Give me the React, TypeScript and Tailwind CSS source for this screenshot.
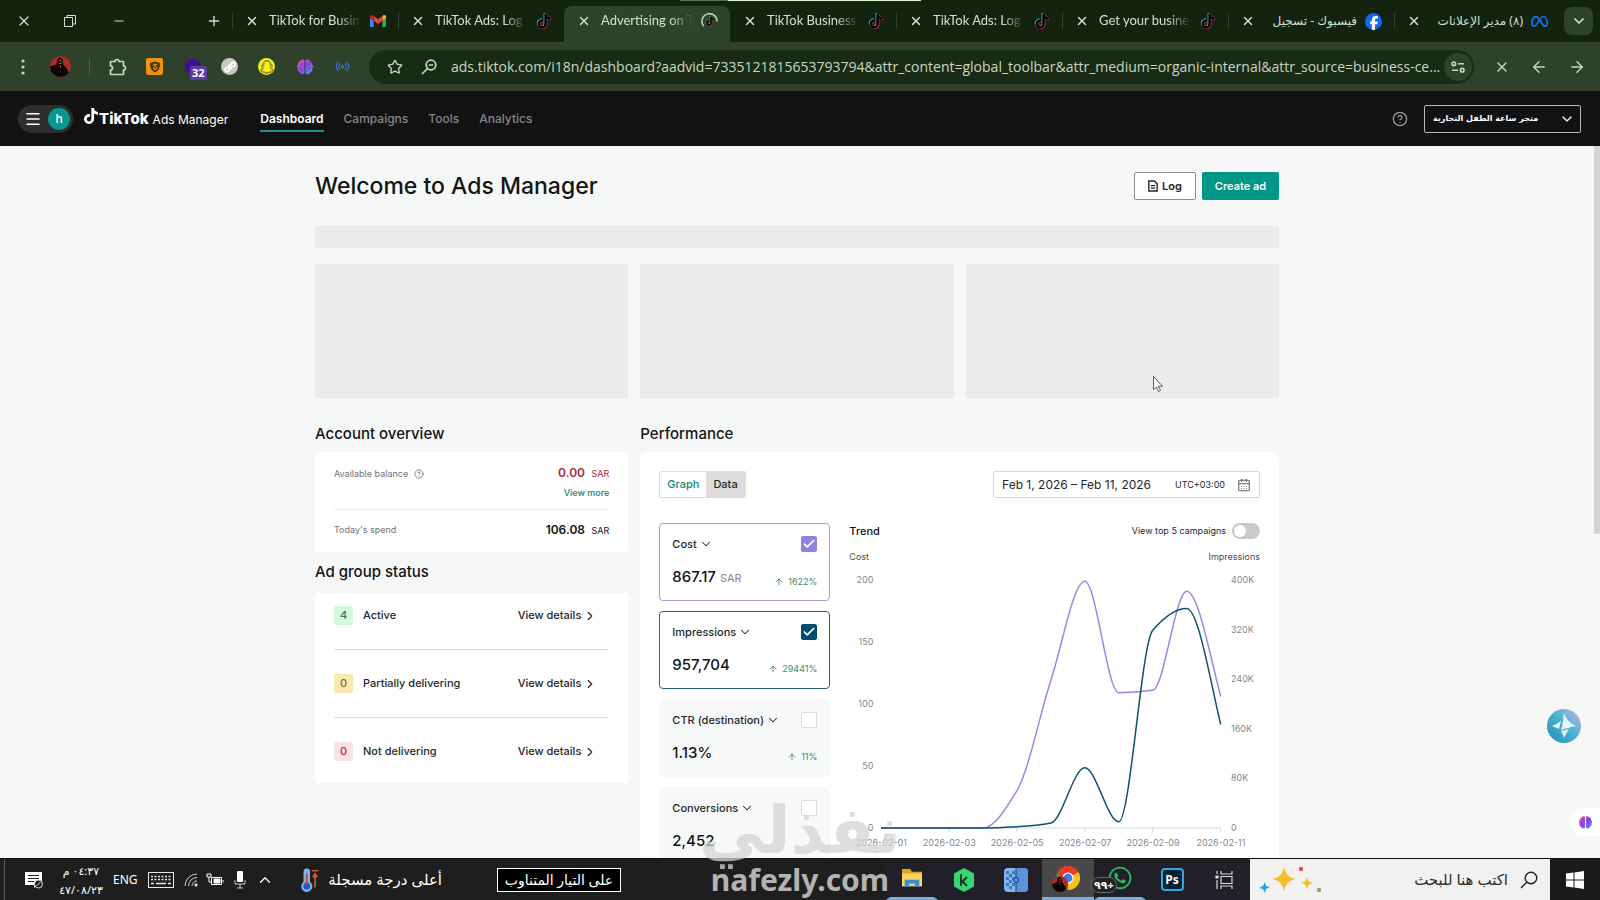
import React from 'react';
import {
  ArrowLeft,
  ArrowRight,
  ArrowUp,
  CalendarDays,
  Check,
  ChevronDown,
  ChevronRight,
  ChevronUp,
  CircleHelp,
  Menu,
  Minus,
  Plus,
  Radio,
  Star,
  X,
} from 'lucide-react';
import { FaFacebookF, FaMeta, FaSnapchat, FaWhatsapp } from 'react-icons/fa6';

// Types
interface BrowserTab {
  id: number;
  title: string;
  icon: 'gmail' | 'tiktok' | 'loading' | 'facebook' | 'meta';
  rtl?: boolean;
}

interface Metric {
  id: string;
  label: string;
  value: string;
  unit?: string;
  change: string;
  checked: boolean;
  card: string;
  box: string;
}

interface StatusRow {
  label: string;
  count: number;
  badge: string;
}

const tabs: BrowserTab[] = [
  { id: 1, title: 'TikTok for Business', icon: 'gmail' },
  { id: 2, title: 'TikTok Ads: Log in', icon: 'tiktok' },
  { id: 3, title: 'Advertising on TikTok', icon: 'loading' },
  { id: 4, title: 'TikTok Business Center', icon: 'tiktok' },
  { id: 5, title: 'TikTok Ads: Log in', icon: 'tiktok' },
  { id: 6, title: 'Get your business', icon: 'tiktok' },
  { id: 7, title: 'فيسبوك - تسجيل', icon: 'facebook', rtl: true },
  { id: 8, title: '(٨) مدير الإعلانات', icon: 'meta', rtl: true },
];

const navItems = ['Dashboard', 'Campaigns', 'Tools', 'Analytics'];

const metrics: Metric[] = [
  { id: 'cost', label: 'Cost', value: '867.17', unit: 'SAR', change: '1622%', checked: true, card: 'border-[#a99be0] bg-white', box: 'border-[#8f80e6] bg-[#8f80e6]' },
  { id: 'impressions', label: 'Impressions', value: '957,704', change: '29441%', checked: true, card: 'border-[#2f6480] bg-white', box: 'border-[#004d6e] bg-[#004d6e]' },
  { id: 'ctr', label: 'CTR (destination)', value: '1.13%', change: '11%', checked: false, card: 'border-[#f7f8f8] bg-[#f7f8f8]', box: 'border-[#dcdcdc] bg-white' },
  { id: 'conversions', label: 'Conversions', value: '2,452', change: '', checked: false, card: 'border-[#f7f8f8] bg-[#f7f8f8]', box: 'border-[#dcdcdc] bg-white' },
];

const statusRows: StatusRow[] = [
  { label: 'Active', count: 4, badge: 'bg-[#d5f8dd] text-[#2b7d4f]' },
  { label: 'Partially delivering', count: 0, badge: 'bg-[#f8e9b0] text-[#8a6a1c]' },
  { label: 'Not delivering', count: 0, badge: 'bg-[#fbe3e1] text-[#b5303c]' },
];

const costSeries = [0, 0, 0, 0, 30, 119, 199, 109, 111, 191, 106];
const impressionSeries = [0, 0, 0, 0, 2, 8, 97, 10, 319, 354, 167];

const PLOT_W = 340;
const PLOT_H = 248;

// Monotone cubic path through evenly spaced points
const smoothPath = (values: number[], max: number): string => {
  const step = PLOT_W / (values.length - 1);
  const ys = values.map((v) => PLOT_H - (v / max) * PLOT_H);
  const slopes = ys.slice(1).map((y, i) => y - ys[i]);
  const tangents = ys.map((_, i) => {
    if (i === 0) return slopes[0];
    if (i === ys.length - 1) return slopes[i - 1] * 1.25;
    const a = slopes[i - 1];
    const b = slopes[i];
    return a * b <= 0 ? 0 : (2 * a * b) / (a + b);
  });
  let d = `M0 ${ys[0]}`;
  for (let i = 1; i < ys.length; i++) {
    d += ` C${(i - 1 + 1 / 3) * step} ${ys[i - 1] + tangents[i - 1] / 3} ${(i - 1 / 3) * step} ${ys[i] - tangents[i] / 3} ${i * step} ${ys[i]}`;
  }
  return d;
};

const NOTE =
  'M12.525.02c1.31-.02 2.61-.01 3.91-.02.08 1.53.63 3.09 1.75 4.17 1.12 1.11 2.7 1.62 4.24 1.79v4.03c-1.44-.05-2.89-.35-4.2-.97-.57-.26-1.1-.59-1.62-.93-.01 2.92.01 5.84-.02 8.75-.08 1.4-.54 2.79-1.35 3.94-1.31 1.92-3.58 3.17-5.91 3.21-1.43.08-2.86-.31-4.08-1.03-2.02-1.19-3.44-3.37-3.65-5.71-.02-.5-.03-1-.01-1.49.18-1.9 1.12-3.72 2.58-4.96 1.66-1.44 3.98-2.13 6.15-1.72.02 1.48-.04 2.96-.04 4.44-.99-.32-2.15-.23-3.02.37-.63.41-1.11 1.04-1.36 1.75-.21.51-.15 1.07-.14 1.61.24 1.64 1.82 3.02 3.5 2.87 1.12-.01 2.19-.66 2.77-1.61.19-.33.4-.67.41-1.06.1-1.79.06-3.57.07-5.36.01-4.03-.01-8.05.02-12.07z';

// Icons
const TikTokColor: React.FC<{ className?: string }> = ({ className }) => (
  <svg viewBox="-1 -1 26 26" className={className}>
    <path d={NOTE} fill="#25c9c4" transform="translate(-1.2 -1)" />
    <path d={NOTE} fill="#d61f4c" transform="translate(1.2 1)" />
    <path d={NOTE} fill="#050505" />
  </svg>
);

const Gmail: React.FC = () => (
  <svg viewBox="52 42 88 66" className="w-4">
    <path fill="#4285f4" d="M58 108h14V74L52 59v43c0 3.32 2.69 6 6 6" />
    <path fill="#34a853" d="M120 108h14c3.32 0 6-2.69 6-6V59l-20 15" />
    <path fill="#fbbc04" d="M120 48v26l20-15v-8c0-7.42-8.47-11.65-14.4-7.2" />
    <path fill="#ea4335" d="M72 74V48l24 18 24-18v26L96 92" />
    <path fill="#c5221f" d="M52 51v8l20 15V48l-5.6-4.2c-5.94-4.45-14.4-.22-14.4 7.2" />
  </svg>
);

const BrainIcon: React.FC<{ className?: string; id: string }> = ({ className, id }) => (
  <svg viewBox="0 0 20 20" className={className}>
    <defs>
      <linearGradient id={id} x1="0" y1="0" x2="1" y2="1">
        <stop offset="0" stopColor="#f4559a" />
        <stop offset=".5" stopColor="#8a4be8" />
        <stop offset="1" stopColor="#4aa2f5" />
      </linearGradient>
    </defs>
    <path
      fill={`url(#${id})`}
      d="M9.4 2.6C8.4 1 5.6 1.2 5 3.2 3 3.4 2 5.2 2.6 6.8.9 7.8.6 10.2 2 11.4c-.8 2 .2 3.8 2 4.2.4 2.4 4 3.4 5.4 1.4zM10.6 2.6C11.6 1 14.4 1.2 15 3.2c2 .2 3 2 2.4 3.6 1.7 1 2 3.4.6 4.6.8 2-.2 3.8-2 4.2-.4 2.4-4 3.4-5.4 1.4z"
    />
    <path
      d="M4.6 7c1.200-.6 2.400 0 2.600 1.200M3.400 11.400c1.400-.6 3 0 3.200 1.600M6.800 4.600v1.200M15.400 7c-1.200-.6-2.400 0-2.600 1.200M16.600 11.400c-1.400-.6-3 0-3.200 1.600M13.200 4.600v1.200M7.200 15.200v-1M12.800 15.200v-1"
      stroke="#43208a"
      strokeOpacity=".6"
      fill="none"
    />
  </svg>
);

const ProfileBubble: React.FC<{ className?: string; id: string }> = ({ className, id }) => (
  <svg viewBox="0 0 20 20" className={className}>
    <clipPath id={id}>
      <circle cx="10" cy="10" r="10" />
    </clipPath>
    <g clipPath={`url(#${id})`}>
      <rect width="20" height="20" fill="#b02828" />
      <path d="M0 10l6-2 1-5c1-2 4-2 5 0l.5 5 3.500 4 4 8H0z" fill="#0c0606" />
      <path d="M9 4l2 1M9 7h2M10 9v2" stroke="#e0563c" />
    </g>
  </svg>
);

const TabIcon: React.FC<{ icon: BrowserTab['icon'] }> = ({ icon }) => {
  if (icon === 'gmail') return <Gmail />;
  if (icon === 'tiktok') return <TikTokColor className="w-4 h-4" />;
  if (icon === 'facebook') {
    return (
      <span className="flex h-[17px] w-[17px] items-end justify-center overflow-hidden rounded-full bg-[#0f66f5]">
        <FaFacebookF className="h-3.5 w-3.5 text-white" />
      </span>
    );
  }
  if (icon === 'meta') return <FaMeta className="h-[17px] w-[17px] text-[#1470e8]" />;
  return (
    <span className="relative flex h-[17px] w-[17px] items-center justify-center">
      <TikTokColor className="h-2.5 w-2.5" />
      <svg viewBox="0 0 18 18" className="absolute inset-0">
        <path d="M3 14A8 8 0 1 1 17 9" fill="none" stroke="#b9dbae" strokeWidth="1.600" />
      </svg>
    </span>
  );
};

// Browser chrome
const TabStrip: React.FC = () => (
  <div className="relative flex h-[42px] shrink-0 items-stretch bg-[#14230f] text-[#d3e0cc]">
    <div className="absolute left-[680px] top-0 flex h-px w-[241px]">
      <span className="w-12 bg-[#5b6f56]" />
      <span className="flex-1 bg-[#d9f2cf]" />
    </div>
    <div className="flex w-[232px] shrink-0 items-center pl-4">
      <button aria-label="Close window"><X className="h-4 w-4" strokeWidth={1.75} /></button>
      <button aria-label="Restore" className="ml-8">
        <svg viewBox="0 0 12 12" className="h-3 w-3" fill="none" stroke="currentColor">
          <path d="M.5 2.500h8v9h-8zM3 2.500v-2h8.500v8.500h-3" />
        </svg>
      </button>
      <button aria-label="Minimize" className="ml-9"><Minus className="h-3.5 w-3.5" strokeWidth={1.75} /></button>
      <button aria-label="New tab" className="ml-auto mr-2.5"><Plus className="h-4 w-4" /></button>
    </div>
    <div role="tablist" className="flex min-w-0 flex-1">
      {tabs.map((tab) => {
        const active = tab.icon === 'loading';
        const divider = tab.id !== 3 && tab.id !== 4;
        return (
          <div
            key={tab.id}
            role="tab"
            aria-selected={active}
            className={`flex min-w-0 flex-1 items-center ${active ? 'mt-1.5 rounded-t-lg bg-[#2f422b] pb-1.5' : ''}`}
          >
            <span className={`h-4 w-px shrink-0 ${divider ? 'bg-[#2f422b]' : ''}`} />
            <button aria-label="Close tab" className="ml-3 shrink-0"><X className="h-3.5 w-3.5" strokeWidth={2.5} /></button>
            <span
              dir={tab.rtl ? 'rtl' : 'ltr'}
              className={`ml-2.5 flex-1 overflow-hidden whitespace-nowrap ${tab.rtl ? 'text-xs' : "text-[13px] font-['Lato','Open_Sans',sans-serif] [mask-image:linear-gradient(to_right,black_75%,transparent)]"}`}
            >
              {tab.title}
            </span>
            <span className="ml-2 mr-3 flex w-[17px] shrink-0 justify-center"><TabIcon icon={tab.icon} /></span>
          </div>
        );
      })}
    </div>
    <div className="flex w-10 shrink-0 items-center pl-1">
      <button aria-label="Search tabs" className="flex h-7 w-[29px] items-center justify-center rounded-lg bg-[#2f422b]">
        <ChevronDown className="h-4 w-4" strokeWidth={2.5} />
      </button>
    </div>
  </div>
);

const AddressBar: React.FC = () => (
  <div className="flex h-[49px] shrink-0 items-center bg-[#2f402b] text-[#c8d6c0]">
    <div className="flex w-[369px] shrink-0 items-center pl-[21px]">
      <svg viewBox="0 0 4 16" className="h-4 w-1" fill="currentColor">
        <circle cx="2" cy="2" r="1.600" /><circle cx="2" cy="8" r="1.600" /><circle cx="2" cy="14" r="1.600" />
      </svg>
      <ProfileBubble id="toolbar-profile" className="ml-[25px] h-[21px] w-[21px]" />
      <span className="ml-[18px] h-4 w-px bg-[#4b6045]" />
      <svg viewBox="0 0 18 18" className="ml-[19px] h-[18px] w-[18px]" fill="none" stroke="currentColor" strokeWidth="1.700" strokeLinejoin="round">
        <path d="M1.500 3.500H6a2 2 0 0 1 4 0h4.500V8a2 2 0 0 1 0 4v4.500h-13v-4.500a2 2 0 0 0 0-4z" />
      </svg>
      <span className="ml-[19px] flex h-[17px] w-[17px] items-center justify-center rounded-xs bg-[#f0920f]">
        <svg viewBox="0 0 14 14" className="h-3.5 w-3.5">
          <path d="M2 3l5-1.500L12 3c0 5-1.500 8-5 9.500C3.500 11 2 8 2 3z" fill="#4a3210" />
          <path d="M5 9l4-5M5 6a2 2 0 0 1 3-1.500M6 9.500a2.500 2.500 0 0 0 3-2.500" stroke="#f0920f" strokeWidth="1.200" fill="none" />
        </svg>
      </span>
      <span className="relative ml-[21px] h-[17px] w-[17px]">
        <svg viewBox="0 0 18 18" className="h-[17px] w-[17px]">
          <path d="M9 0l8 4v6l-8 7-8-4V5z" fill="#3c1192" />
        </svg>
        <span className="absolute left-1.5 top-2 rounded-xs bg-[#5c3da8] px-0.5 text-[11px] font-bold leading-[14px] text-white">32</span>
      </span>
      <span className="ml-5 flex h-[17px] w-[17px] items-center justify-center rounded-full bg-[#c5cbc2]">
        <svg viewBox="0 0 16 16" className="h-4 w-4" fill="none" stroke="#fff" strokeWidth="1.800" strokeLinecap="round">
          <path d="M7 6v4.500a2 2 0 1 1-2-2M9 10V5.500a2 2 0 1 1 2 2" />
        </svg>
      </span>
      <span className="ml-5 flex h-[17px] w-[17px] items-center justify-center rounded-full bg-[#f5ee1a]">
        <FaSnapchat className="h-3.5 w-3.5 overflow-visible stroke-[#55520c] stroke-[24px] text-white" />
      </span>
      <BrainIcon id="toolbar-brain" className="ml-[21px] h-[18px] w-[18px]" />
      <Radio className="ml-[21px] h-[15px] w-[15px] text-[#3d6fd0]" />
    </div>
    <div className="flex h-[34px] min-w-0 flex-1 items-center rounded-full bg-[#1a2b15] pl-[18px] pr-0.5">
      <Star className="h-4 w-4 shrink-0" />
      <svg viewBox="0 0 16 16" className="ml-[18px] h-4 w-4 shrink-0" fill="none" stroke="currentColor" strokeWidth="1.700">
        <circle cx="10" cy="6" r="4.800" /><path d="M6.500 9.500L1 15M7.800 6h4.400" />
      </svg>
      <input
        aria-label="Address"
        readOnly
        value="ads.tiktok.com/i18n/dashboard?aadvid=7335121815653793794&attr_content=global_toolbar&attr_medium=organic-internal&attr_source=business-ce..."
        className="ml-3.5 min-w-0 flex-1 bg-transparent text-sm font-['Open_Sans',sans-serif] outline-none"
      />
      <button aria-label="Site settings" className="flex h-7 w-7 shrink-0 items-center justify-center rounded-full bg-[#2f402b]">
        <svg viewBox="0 0 14 12" className="h-3 w-3.5" fill="none" stroke="currentColor" strokeWidth="1.600">
          <circle cx="2.800" cy="2.800" r="1.800" /><path d="M7 2.800h6M1 9.200h6" /><circle cx="11.200" cy="9.200" r="1.800" />
        </svg>
      </button>
    </div>
    <div className="flex w-[126px] shrink-0 items-center gap-5 pl-5">
      <button aria-label="Stop"><X className="h-4 w-4" /></button>
      <button aria-label="Back"><ArrowLeft className="h-[18px] w-[18px]" /></button>
      <button aria-label="Forward"><ArrowRight className="h-[18px] w-[18px]" /></button>
    </div>
  </div>
);

// Ads Manager header
const SiteHeader: React.FC = () => (
  <header className="flex h-[55px] shrink-0 items-center bg-[#121212] pl-[18px] pr-[19px] font-['Inter','Liberation_Sans',sans-serif]">
    <button aria-label="Open menu" className="flex h-7 w-[55px] items-center justify-between rounded-full bg-[#2e2e2e] pl-1.5 pr-[3px] text-white">
      <Menu className="h-[18px] w-[18px]" />
      <span className="flex h-[22px] w-[22px] items-center justify-center rounded-full bg-[#0b958c] text-xs font-medium">h</span>
    </button>
    <a href="#home" className="ml-2.5 flex items-baseline text-white">
      <svg viewBox="0 0 24 24" className="h-4 w-4" fill="currentColor"><path d={NOTE} /></svg>
      <span className="text-[15px] font-extrabold leading-5">TikTok</span>
      <span className="ml-1 text-xs">Ads Manager</span>
    </a>
    <nav className="ml-8 flex gap-5 text-xs">
      {navItems.map((item) => (
        <a
          key={item}
          href={`#${item.toLowerCase()}`}
          className={`border-b-2 pt-0.5 leading-[22px] ${item === 'Dashboard' ? 'border-[#1b8f88] font-semibold text-white' : 'border-transparent font-medium text-[#84878a]'}`}
        >
          {item}
        </a>
      ))}
    </nav>
    <button aria-label="Help" className="ml-auto text-[#9b9b9b]"><CircleHelp className="h-4 w-4" /></button>
    <div className="relative ml-4">
      <select
        aria-label="Account"
        dir="ltr"
        className="block h-7 w-[157px] appearance-none rounded-xs border border-[#b8b8b8] bg-[#121212] pl-2 pr-7 font-['DejaVu_Sans',sans-serif] text-[8px] font-bold text-white"
      >
        <option>متجر ساعة الطفل التجارية</option>
      </select>
      <ChevronDown className="pointer-events-none absolute right-1.5 top-1.5 h-4 w-4 text-white" />
    </div>
  </header>
);

const AccountOverview: React.FC = () => (
  <section>
    <h2 className="text-[15px] font-medium leading-5">Account overview</h2>
    <div className="mt-2 rounded-sm bg-white px-[19px] py-[13px] text-[9px] leading-4">
      <div className="flex justify-between">
        <span className="flex items-center gap-1.5 text-[#6f7376]">
          Available balance <CircleHelp className="h-2.5 w-2.5" />
        </span>
        <span className="text-[#a8283a]">
          <strong className="mr-1 text-xs font-semibold leading-4">0.00</strong> SAR
        </span>
      </div>
      <div className="mt-[3px] text-right">
        <a href="#balance" className="font-medium text-[#1c7f72]">View more</a>
      </div>
      <div className="mt-2 flex justify-between border-t border-[#e9eaea] pt-3">
        <span className="text-[#6f7376]">Today's spend</span>
        <span>
          <strong className="mr-1 text-xs font-semibold leading-4">106.08</strong> SAR
        </span>
      </div>
    </div>
  </section>
);

const AdGroupStatus: React.FC = () => (
  <section className="mt-2.5">
    <h2 className="text-[15px] font-medium leading-5">Ad group status</h2>
    <ul className="mt-[11px] rounded-sm bg-white px-[19px] pb-[22px] pt-[13px] text-[11px] font-medium text-[#25282a]">
      {statusRows.map((row, i) => (
        <li
          key={row.label}
          className={`flex items-center ${i > 0 ? 'pt-6' : ''} ${i < statusRows.length - 1 ? 'border-b border-[#dcdddd] pb-6' : ''}`}
        >
          <span className={`flex h-[19px] w-[19px] items-center justify-center rounded-xs ${row.badge}`}>{row.count}</span>
          <span className="ml-2.5">{row.label}</span>
          <a href="#details" className="ml-auto mr-3 flex items-center gap-0.5">
            View details <ChevronRight className="h-3.5 w-3.5" />
          </a>
        </li>
      ))}
    </ul>
  </section>
);

const MetricCard: React.FC<{ metric: Metric }> = ({ metric }) => (
  <div className={`h-[78px] rounded border px-3 pt-3 ${metric.card}`}>
    <div className="flex items-center justify-between">
      <button className="flex items-center gap-0.5 text-[11px] font-medium leading-4 text-[#25282a]">
        {metric.label} <ChevronDown className="h-3.5 w-3.5" strokeWidth={1.75} />
      </button>
      <span className="relative h-4 w-4">
        <input
          type="checkbox"
          aria-label={metric.label}
          defaultChecked={metric.checked}
          className={`block h-4 w-4 appearance-none rounded-xs border ${metric.box}`}
        />
        {metric.checked && <Check className="pointer-events-none absolute inset-0 h-4 w-4 p-px text-white" strokeWidth={3} />}
      </span>
    </div>
    <div className="mt-[15px] flex items-end justify-between">
      <span className="text-[15px] font-medium leading-5 text-[#121415]">
        {metric.value} {metric.unit && <span className="text-[11px] font-normal text-[#85888b]">{metric.unit}</span>}
      </span>
      {metric.change && (
        <span className="flex items-center gap-1 text-[9px] leading-3 text-[#3f8a63]">
          <ArrowUp className="h-2.5 w-2.5" /> {metric.change}
        </span>
      )}
    </div>
  </div>
);

const TrendChart: React.FC = () => (
  <div className="min-w-0 flex-1">
    <div className="flex items-center justify-between">
      <h3 className="text-[11px] font-medium leading-4">Trend</h3>
      <label className="flex items-center gap-1.5 text-[9px] leading-4 text-[#25282a]">
        View top 5 campaigns
        <input
          type="checkbox"
          role="switch"
          className="h-4 w-7 appearance-none rounded-full bg-[#c9c9c9] p-0.5 before:block before:h-3 before:w-3 before:rounded-full before:bg-white"
        />
      </label>
    </div>
    <div className="mt-2.5 flex justify-between text-[9px] leading-4 text-[#4a4e51]">
      <span>Cost</span>
      <span>Impressions</span>
    </div>
    <div className="mt-[15px] flex text-[9px] leading-4 text-[#83878b]">
      <div className="-mt-2 flex h-[264px] w-6 flex-col justify-between text-right">
        {[200, 150, 100, 50, 0].map((v) => <span key={v}>{v}</span>)}
      </div>
      <div className="ml-2 min-w-0 flex-1">
        <svg viewBox="0 0 340 248" preserveAspectRatio="none" className="block h-[248px] w-full overflow-visible" fill="none">
          <path d="M0 0H340M0 62H340M0 124H340M0 186H340" stroke="#fafafa" />
          <path d="M0 248H340M68 248v4M136 248v4M204 248v4M272 248v4M340 248v4" stroke="#d5d8da" />
          <path d={smoothPath(costSeries, 200)} stroke="#988ae2" strokeWidth="1.500" />
          <path d={smoothPath(impressionSeries, 400)} stroke="#0b5270" strokeWidth="1.500" />
        </svg>
        <div className="mt-[7px] flex justify-between">
          {['2026-02-01', '2026-02-03', '2026-02-05', '2026-02-07', '2026-02-09', '2026-02-11'].map((day) => (
            <span key={day} className="flex w-0 justify-center whitespace-nowrap">{day}</span>
          ))}
        </div>
      </div>
      <div className="-mt-2 ml-2.5 flex h-[264px] w-[29px] flex-col justify-between">
        {['400K', '320K', '240K', '160K', '80K', '0'].map((v) => <span key={v}>{v}</span>)}
      </div>
    </div>
  </div>
);

const Performance: React.FC = () => (
  <section className="col-span-2">
    <h2 className="text-[15px] font-medium leading-5">Performance</h2>
    <div className="mt-2 rounded-md bg-white px-[19px] pb-10 pt-[19px]">
      <div className="flex items-center justify-between">
        <div className="flex h-[27px] overflow-hidden rounded-xs border border-[#dcdcdc] text-[11px] font-medium">
          <button className="px-[7px] text-[#1c8273]">Graph</button>
          <button className="bg-[#dcdcdc] px-[7px] text-[#25282a]">Data</button>
        </div>
        <button className="flex h-[27px] items-center rounded-xs border border-[#d3d5d6] px-2 text-xs text-[#25282a]">
          Feb 1, 2026 – Feb 11, 2026
          <span className="ml-6 text-[9px]">UTC+03:00</span>
          <CalendarDays className="ml-3 h-3.5 w-3.5 text-[#5c6063]" strokeWidth={1.75} />
        </button>
      </div>
      <div className="mt-[25px] flex gap-[19px]">
        <div className="flex w-[171px] shrink-0 flex-col gap-2.5">
          {metrics.map((metric) => <MetricCard key={metric.id} metric={metric} />)}
        </div>
        <TrendChart />
      </div>
    </div>
  </section>
);

// Windows taskbar
const Taskbar: React.FC = () => (
  <footer className="flex h-[42px] shrink-0 items-center border-t border-[#0c0c0c] bg-[#1e1e1e] text-white">
    <span className="ml-1 h-full w-px bg-[#5a5a5a]" />
    <svg viewBox="0 0 18 18" className="ml-5 h-[18px] w-[18px]">
      <path d="M0 1h17v13h-4l-4 3v-3H0z" fill="#fff" />
      <path d="M3 4.500h11M3 7.500h11M3 10.500h6" stroke="#1e1e1e" strokeWidth="1.200" />
      <circle cx="13.500" cy="13" r="4" fill="#1e1e1e" stroke="#ddd" />
      <path d="M11.500 15l4-4" stroke="#ddd" />
    </svg>
    <div dir="rtl" className="ml-3.5 w-12 shrink-0 whitespace-nowrap text-center text-[11px] leading-[19px]">
      <div>٠٤:٣٧ م</div>
      <div dir="ltr">٤٧/٠٨/٢٣</div>
    </div>
    <span className="ml-2 w-6 text-xs">ENG</span>
    <svg viewBox="0 0 26 16" className="ml-[11px] h-4 w-[26px]" fill="none" stroke="#e8e8e8">
      <rect x=".5" y=".5" width="25" height="15" />
      <path d="M3 4.500h20M3 7.500h20" strokeDasharray="2 1.500" strokeWidth="1.400" />
      <path d="M3 11.500h3M8 11.500h10M20 11.500h3" strokeWidth="1.400" />
    </svg>
    <svg viewBox="0 0 14 14" className="ml-2.5 h-3.5 w-3.5" fill="none" stroke="#cfcfcf">
      <path d="M1 13A12 12 0 0 1 13 1M4.500 13A8.500 8.500 0 0 1 13 4.500M8 13a5 5 0 0 1 5-5" />
      <circle cx="12" cy="12" r="1.200" fill="#fff" />
    </svg>
    <svg viewBox="0 0 18 14" className="ml-2 h-3.5 w-[18px]" fill="none" stroke="#fff">
      <path d="M5.500 4.500h10v7h-10zM17 7v2.500M1 1h4v3H1zM3 4v5h2" />
      <path d="M8 6h6v4H8z" fill="#fff" />
    </svg>
    <svg viewBox="0 0 12 18" className="ml-2.5 h-[18px] w-3">
      <rect x="3" y="0" width="6" height="11" rx="1" fill="#fff" />
      <path d="M1 9v4h10V9M6 13v4M3 17h6" stroke="#ccc" fill="none" />
    </svg>
    <ChevronUp className="ml-2.5 h-[18px] w-[18px]" strokeWidth={1.75} />
    <svg viewBox="0 0 20 26" className="ml-[26px] h-6 w-5">
      <path d="M3 4a3.500 3.500 0 0 1 7 0v11a6 6 0 1 1-7 0z" fill="#7db4ee" />
      <circle cx="6.500" cy="19.500" r="3.800" fill="#1b60c8" />
      <path d="M6.500 6v12" stroke="#d9402c" strokeWidth="2" />
      <path d="M12 3h7M15.500 21V7M13 10l2.500-3.500L18 10" stroke="#d95a2b" strokeWidth="1.800" fill="none" />
    </svg>
    <span dir="rtl" className="ml-3 w-[110px] whitespace-nowrap text-[15px]">أعلى درجة مسجلة</span>
    <span dir="rtl" className="ml-[55px] w-[124px] whitespace-nowrap border border-white bg-black text-center text-[14px] leading-[22px]">على التيار المتناوب</span>

    <div className="ml-auto flex h-full items-stretch bg-[#211f27]">
      <button aria-label="File Explorer" className="flex w-13 items-center justify-center border-x-4 border-x-transparent border-b-3 border-b-[#76aee8]">
        <svg viewBox="0 0 24 22" className="h-5 w-6">
          <path d="M1 1h9l2 3h11v16H1z" fill="#e0a21c" />
          <path d="M1 6h22v14H1z" fill="#fbd462" />
          <path d="M4 21v-8h16v8h-5v-4H9v4z" fill="#3b8fd0" />
        </svg>
      </button>
      <button aria-label="Kaspersky" className="flex w-13 items-center justify-center">
        <svg viewBox="0 0 22 24" className="h-6 w-[22px]">
          <path d="M11 0l10 5.500v13L11 24 1 18.500v-13z" fill="#35d673" />
          <path d="M8 6v12M14 9l-4.500 4.500L14 18" stroke="#0c3a25" strokeWidth="2" fill="none" />
        </svg>
      </button>
      <button aria-label="Archiver" className="flex w-13 items-center justify-center">
        <svg viewBox="0 0 24 24" className="h-6 w-6">
          <rect width="24" height="24" rx="4" fill="#7fb4ec" />
          <path d="M12 0h8a4 4 0 0 1 4 4v16a4 4 0 0 1-4 4h-8z" fill="#5b94dc" />
          <path d="M2 3h3v3H2zM8 3h3v3H8zM5 6h3v3H5zM2 9h3v3H2zM8 9h3v3H8zM5 12h3v3H5zM2 15h3v3H2zM8 15h3v3H8zM5 18h3v3H5z" fill="#3f7ac4" />
          <path d="M12 0v24" stroke="#16407a" />
          <circle cx="12" cy="12" r="2.500" fill="#5b94dc" stroke="#16407a" />
        </svg>
      </button>
      <button aria-label="Chrome" className="flex w-13 items-center justify-center border-b-3 border-[#76aee8] bg-[#484848]">
        <span className="relative h-6 w-6">
          <svg viewBox="0 0 24 24" className="h-6 w-6">
            <path d="M12 12L1.600 6A12 12 0 0 1 22.400 6z" fill="#e33b2e" />
            <path d="M12 12L22.400 6A12 12 0 0 1 12 24z" fill="#fbc116" />
            <path d="M12 12v12A12 12 0 0 1 1.600 6z" fill="#26a148" />
            <path d="M12 6h10.400a12 12 0 0 0-20.800 0L7 13z" fill="#e33b2e" />
            <circle cx="12" cy="12" r="5.600" fill="#fff" />
            <circle cx="12" cy="12" r="4.400" fill="#3f7fe8" />
          </svg>
          <ProfileBubble id="taskbar-profile" className="absolute -left-1 top-2.5 h-4 w-4" />
        </span>
      </button>
      <button aria-label="WhatsApp" className="flex w-13 items-center justify-center border-x-4 border-x-transparent border-b-3 border-b-[#76aee8]">
        <span className="relative">
          <FaWhatsapp className="h-[26px] w-[26px] text-[#2bb865]" />
          <span dir="ltr" className="absolute -left-4 top-3 rounded-full border border-[#666] bg-[#222] px-0.5 text-[11px] font-bold leading-[14px]">٩٩+</span>
        </span>
      </button>
      <button aria-label="Photoshop" className="flex w-13 items-center justify-center">
        <span className="flex h-[23px] w-[23px] items-center justify-center rounded-sm border-2 border-[#35a7e0] bg-[#06202f] text-xs font-bold">Ps</span>
      </button>
      <button aria-label="Task view" className="flex w-13 items-center justify-center">
        <svg viewBox="0 0 18 18" className="h-[18px] w-[18px]" fill="none" stroke="#d8d8d8" strokeWidth="1.200">
          <path d="M6 0v3h11V0M6 5.500h11v7H6zM6 18v-3h11v3M2 0v3M2 9v9" />
          <path d="M1 5h2v2H1z" fill="#fff" />
        </svg>
      </button>
      <div className="flex w-[300px] items-center bg-[#f1f1f1] pl-2 pr-3">
        <svg viewBox="0 0 66 28" className="h-7 w-[66px]">
          <path d="M26 1c2 8 4 10 12 12-8 2-10 4-12 12-2-8-4-10-12-12 8-2 10-4 12-12z" fill="#f8bd24" />
          <path d="M49 11c1 4 2 5 6 6-4 1-5 2-6 6-1-4-2-5-6-6 4-1 5-2 6-6z" fill="#f8bd24" />
          <path d="M7 16l1 4 4 1-4 2-1 4-2-4-4-1 4-2z" fill="#2a9fe0" />
          <circle cx="43" cy="3" r="2.200" fill="#d9592e" />
          <circle cx="61" cy="24" r="2.200" fill="#7cb454" />
        </svg>
        <input aria-label="Search" dir="rtl" placeholder="اكتب هنا للبحث" className="min-w-0 flex-1 bg-transparent px-3 text-[15px] outline-none placeholder:text-[#2c2c2c]" />
        <svg viewBox="0 0 18 18" className="h-[18px] w-[18px]" fill="none" stroke="#222" strokeWidth="1.400">
          <circle cx="11" cy="7" r="5.800" /><path d="M7 11l-6 6" />
        </svg>
      </div>
      <button aria-label="Start" className="flex w-[50px] items-center justify-center bg-[#1a1a1a]">
        <svg viewBox="0 0 18 18" className="h-[18px] w-[18px]" fill="#fff">
          <path d="M0 2.500L7.500 1.500V8.500H0zM8.500 1.400L18 0v8.500H8.500zM0 9.500h7.500v7L0 15.500zM8.500 9.500H18V18l-9.500-1.400z" />
        </svg>
      </button>
    </div>
  </footer>
);

const App: React.FC = () => (
  <div className="relative flex h-screen flex-col overflow-hidden font-['Noto_Sans','DejaVu_Sans',sans-serif]">
    <TabStrip />
    <AddressBar />
    <SiteHeader />

    <div className="relative flex min-h-0 flex-1 bg-[#f6f8f7] font-['Inter','Liberation_Sans',sans-serif] text-[#121415]">
      <main className="min-w-0 flex-1 overflow-hidden">
        <div className="mx-auto max-w-[964px] pt-[26px]">
          <div className="flex h-7 items-center justify-between">
            <h1 className="text-[23px] font-medium">Welcome to Ads Manager</h1>
            <div className="flex h-full gap-1.5 text-[11px] font-semibold">
              <button className="flex w-[62px] items-center justify-center gap-1 rounded-xs border border-[#8b8e90] bg-white text-[#25282a]">
                <svg viewBox="0 0 12 14" className="h-3 w-2.5" fill="none" stroke="currentColor" strokeWidth="1.700">
                  <path d="M1 1h6.500L11 4.500V13H1zM3.500 6.500h5M3.500 9.500h5" />
                </svg>
                Log
              </button>
              <button className="w-[77px] rounded-xs bg-[#009688] text-white">Create ad</button>
            </div>
          </div>

          {/* Loading placeholders */}
          <div className="mt-[26px] h-[22px] rounded-xs bg-[#eaebeb]" />
          <div className="mt-4 grid grid-cols-3 gap-3">
            <div className="h-[134px] rounded-xs bg-[#eaebeb]" />
            <div className="h-[134px] rounded-xs bg-[#eaebeb]" />
            <div className="h-[134px] rounded-xs bg-[#eaebeb]" />
          </div>

          <div className="mt-[26px] grid grid-cols-3 gap-3">
            <div>
              <AccountOverview />
              <AdGroupStatus />
            </div>
            <Performance />
          </div>
        </div>
      </main>
      <div className="w-1.5 shrink-0">
        <div className="h-[388px] bg-[#d3d3d3]" />
      </div>

      <svg viewBox="0 0 34 34" className="absolute bottom-[115px] right-[19px] h-[34px] w-[34px]">
        <defs>
          <linearGradient id="assistant" x1="1" y1="0" x2="0" y2="1">
            <stop offset="0" stopColor="#c9b5e6" />
            <stop offset=".45" stopColor="#4fb3d3" />
            <stop offset="1" stopColor="#1d8fb0" />
          </linearGradient>
        </defs>
        <circle cx="17" cy="17" r="17" fill="url(#assistant)" />
        <path d="M17 4c1 3 2 4 3 6 2 3 5 5 9 7-5 1-10 2-15 4 2-5 2-11 3-17zM14 12l-2 8-7-3c3-1 6-3 9-5zM14 22l8-2c-2 3-3 5-5 9-1-3-1-4-3-7z" fill="#e6f6fa" />
      </svg>
      <div className="absolute bottom-[22px] right-0 flex h-7 w-[30px] items-center justify-center rounded-l-full bg-white">
        <BrainIcon id="side-brain" className="h-[15px] w-[15px]" />
      </div>
    </div>

    <Taskbar />

    {/* Cursor */}
    <svg viewBox="0 0 10 16" className="absolute left-[1153px] top-[376px] h-4 w-2.5">
      <path d="M.5.5v13l3-2.500 2 4.500 2-1-2-4.200h4z" fill="#fff" stroke="#333" strokeWidth=".8" />
    </svg>

    {/* Watermark */}
    <div className="pointer-events-none absolute bottom-1 left-1/2 flex w-[200px] -translate-x-1/2 flex-col items-center whitespace-nowrap font-bold">
      <span dir="rtl" className="text-[66px] leading-[66px] font-['DejaVu_Sans',sans-serif] text-[#d4d4d4]/75">نفذلي</span>
      <span className="text-[30px] leading-8 text-[#cfcfcf]/85">nafezly.com</span>
    </div>
  </div>
);

export default App;
